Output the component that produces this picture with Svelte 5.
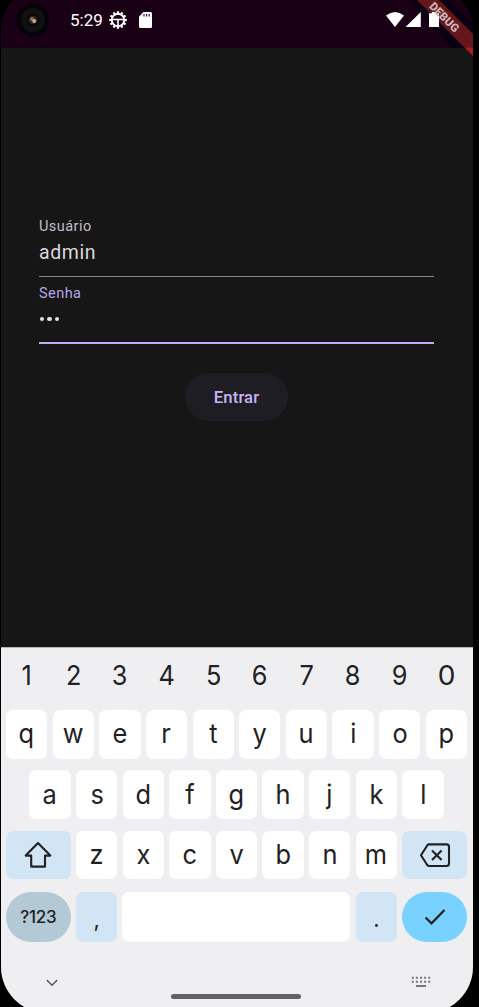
<script>
  const digits = [...'1234567890'];
  const top = [...'qwertyuiop'];
  const home = [...'asdfghjkl'];
  const bottom = [...'zxcvbnm'];
  const teeth = Array.from({ length: 12 }, (_, i) => i * 30);
</script>

<main class="stage">
  <div class="phone">
    <header class="status">
      <svg class="camera" width="34" height="34" viewBox="0 0 34 34">
        <circle cx="17" cy="17" r="16.5" fill="#050307" />
        <circle cx="17" cy="17" r="12" fill="#111" />
        <circle cx="17" cy="17" r="6.5" fill="#080808" />
        <circle cx="17" cy="17" r="4.3" fill="#2b2523" />
        <circle cx="15.9" cy="15.9" r="2" fill="#8e6b55" />
        <circle cx="18.2" cy="18" r="2" fill="#d0a58a" />
      </svg>
      <span class="time">5:29</span>
      <svg class="gear" width="18" height="18" viewBox="0 0 18 18">
        {#each teeth as angle}
          <rect x="7.9" y="0.2" width="2.2" height="3" fill="#fff" transform="rotate({angle} 9 9)" />
        {/each}
        <circle cx="9" cy="9" r="6.2" fill="none" stroke="#fff" stroke-width="1.9" />
        <path d="M3.5 8.5H14.5M9 9V15" stroke="#fff" stroke-width="1.6" />
      </svg>
      <svg class="card" width="13" height="16" viewBox="0 0 13 16">
        <path d="M4.5 0H11.5Q13 0 13 1.5V14.5Q13 16 11.5 16H1.5Q0 16 0 14.5V4.5Z" fill="#fff" />
        <path d="M5 2V4.6M7.6 2V4.6M10.2 2V4.6" stroke="#190015" stroke-width="1.1" />
      </svg>
      <svg class="signals" width="53" height="16" viewBox="0 0 53 16">
        <path d="M0 3.6Q9-3.4 18 3.6L9 15Z" fill="#fff" />
        <path d="M19.5 15L34.8 0V15Z" fill="#fff" />
        <path d="M43 1.3H46V0H50V1.3H53V15H43Z" fill="#fff" />
      </svg>
    </header>

    <section class="login">
      <div class="field">
        <label for="user">Usuário</label>
        <span id="user" class="value">admin</span>
      </div>
      <div class="field active">
        <label for="pass">Senha</label>
        <span id="pass" class="value dots"><i></i><i></i><i></i></span>
      </div>
      <button class="enter">Entrar</button>
    </section>

    <section class="keyboard">
      <div class="row numbers">
        {#each digits as key}<span class:round={key === '0'}>{key}</span>{/each}
      </div>
      <div class="row">
        {#each top as key}<button class="key"><span>{key}</span></button>{/each}
      </div>
      <div class="row home">
        {#each home as key}<button class="key"><span>{key}</span></button>{/each}
      </div>
      <div class="row">
        <button class="key wide blue" aria-label="Shift">
          <svg width="28" height="28" viewBox="0 0 28 28">
            <path d="M14 2L26.3 14.6H21V25.6H7.2V14.6H1.7Z" fill="none" stroke="#1f2224" stroke-width="2.1" stroke-linejoin="round" />
          </svg>
        </button>
        {#each bottom as key}<button class="key"><span>{key}</span></button>{/each}
        <button class="key wide blue" aria-label="Backspace">
          <svg width="32" height="26" viewBox="0 0 32 26">
            <path d="M10 2.4H27.5Q30 2.4 30 4.9V21.5Q30 24 27.5 24H10Q9 24 8.4 23.2L2 13.2L8.4 3.2Q9 2.4 10 2.4Z" fill="none" stroke="#1f2224" stroke-width="2.1" stroke-linejoin="round" />
            <path d="M13 8.4L22.6 18M22.6 8.4L13 18" stroke="#1f2224" stroke-width="2.1" />
          </svg>
        </button>
      </div>
      <div class="row last">
        <button class="key wide symbols">?123</button>
        <button class="key blue comma">,</button>
        <button class="key space" aria-label="Space"></button>
        <button class="key blue period">.</button>
        <button class="key wide done" aria-label="Done">
          <svg width="22" height="18" viewBox="0 0 22 18">
            <path d="M1.5 9.5L7.5 15.3L20.5 2" fill="none" stroke="#1f2224" stroke-width="2.3" />
          </svg>
        </button>
      </div>
      <footer class="nav">
        <svg width="12" height="8" viewBox="0 0 12 8">
          <path d="M.8 1L6 6.2L11.2 1" fill="none" stroke="#5d5d5f" stroke-width="1.6" />
        </svg>
        <span class="handle"></span>
        <svg width="20" height="12" viewBox="0 0 20 12">
          <path d="M.8 1.8H20M.8 5.8H20" stroke="#77777a" stroke-width="2" stroke-dasharray="2 2.1" />
          <path d="M5 10H15" stroke="#77777a" stroke-width="2" />
        </svg>
      </footer>
    </section>

    <div class="banner">
      <div class="shade"></div>
      <div class="ribbon"></div>
      <span>DEBUG</span>
    </div>
  </div>
</main>

<style>
  :global(body) { background: #000; }
  * { box-sizing: border-box; }
  .stage {
    height: 1007px;
    overflow: hidden;
    font-family: Roboto, sans-serif;
  }
  .phone {
    position: relative;
    display: flex;
    flex-direction: column;
    width: 472px;
    height: 1028px;
    margin: -15px 0 0 1px;
    border-radius: 46px;
    overflow: hidden;
    background: #161616;
  }
  .status {
    display: flex;
    align-items: flex-start;
    height: 63px;
    padding-top: 15px;
    background: #190015;
    color: #fff;
  }
  .camera { margin: 3px 0 0 15px; }
  .time { margin: 10px 0 0 20px; width: 39px; font-size: 17px; line-height: 20px; }
  .gear { margin-top: 11px; }
  .card { margin: 12px 0 0 12px; }
  .signals { position: relative; z-index: 1; margin: 12px 34px 0 auto; }
  .banner {
    position: absolute;
    top: 15px;
    right: 0;
    width: 72px;
    height: 72px;
  }
  .shade, .ribbon { position: absolute; inset: 0; }
  .shade {
    background: linear-gradient(to bottom, #0b0013 48px, #151515 48px);
    clip-path: polygon(8px 0, 48px 0, 72px 24px, 72px 72px);
  }
  .ribbon {
    background: linear-gradient(to bottom, #64161a 47px, #b01b1c 48px);
    clip-path: polygon(16px 0, 38px 0, 72px 34px, 72px 56px);
  }
  .banner span {
    position: absolute;
    left: 24px;
    top: 12px;
    z-index: 2;
    text-align: center;
    width: 38px;
    font-size: 11.5px;
    line-height: 11px;
    font-weight: 900;
    color: #c9b4b8;
    transform: rotate(45deg);
  }
  .login {
    display: flex;
    flex-direction: column;
    height: 599px;
    padding: 162px 39px 0 38px;
  }
  .field {
    display: flex;
    flex-direction: column;
    height: 67px;
    padding-top: 9px;
    border-bottom: 1.5px solid #8b8590;
    color: #c3bec8;
  }
  .field label { font-size: 14.5px; line-height: 16px; letter-spacing: .45px; }
  .value { margin-top: 6px; font-size: 19.5px; line-height: 24px; letter-spacing: .6px; color: #ddd8df; }
  .active { border-bottom: 2.5px solid #c4acf2; }
  .active label { color: #bba5e8; }
  .dots { display: flex; gap: 3px; padding: 9px 0 0 1px; }
  .dots i { width: 4.3px; height: 4.3px; border-radius: 50%; background: #e4dfe6; }
  .enter {
    align-self: center;
    width: 103px;
    height: 48px;
    margin-top: 29px;
    padding: 2px 0 0;
    border: 0;
    border-radius: 24px;
    background: #1e1d23;
    color: #c9b3f5;
    font: 500 16.7px/20px Roboto, sans-serif;
    letter-spacing: .1px;
  }
  .keyboard {
    display: flex;
    flex: 1;
    flex-direction: column;
    padding: 0 6px 0 5px;
    background: #efeff2;
    border-top: 1px solid #b5b5b7;
  }
  .row {
    display: flex;
    justify-content: space-between;
    height: 48.6px;
    margin-bottom: 11.8px;
  }
  .numbers { height: 50.2px; color: #1f2224; font: 400 27.5px/54px Inter, sans-serif; }
  .numbers span { width: 41.3px; text-align: center; transform: scaleX(.92); }
  .numbers .round { transform: scaleX(1.02); }
  .home { padding: 0 23.4px; }
  .key {
    display: flex;
    align-items: center;
    justify-content: center;
    width: 41.3px;
    padding: 0;
    border: 0;
    border-radius: 7px;
    background: #fff;
    color: #1f2224;
    font: 400 27px/48px Inter, sans-serif;
  }
  .key span { transform: scaleX(.94); }
  .wide { width: 64.7px; }
  .blue { background: #d2e5f4; }
  .last { height: 50px; margin: .8px 0 0; }
  .symbols { border-radius: 25px; background: #b4c9d6; font-size: 17px; font-weight: 500; letter-spacing: -.2px; }
  .comma, .period { padding-top: 5px; font-size: 22px; }
  .space { width: 228px; }
  .done { border-radius: 25px; background: #79d1ff; }
  .nav {
    display: flex;
    justify-content: space-between;
    padding: 34px 36px 0 40px;
  }
  .nav .handle {
    width: 130px;
    height: 5px;
    margin: 18px 0 0 3px;
    border-radius: 3px;
    background: #626264;
  }
  .nav svg:first-child { margin-top: 3px; }
</style>
